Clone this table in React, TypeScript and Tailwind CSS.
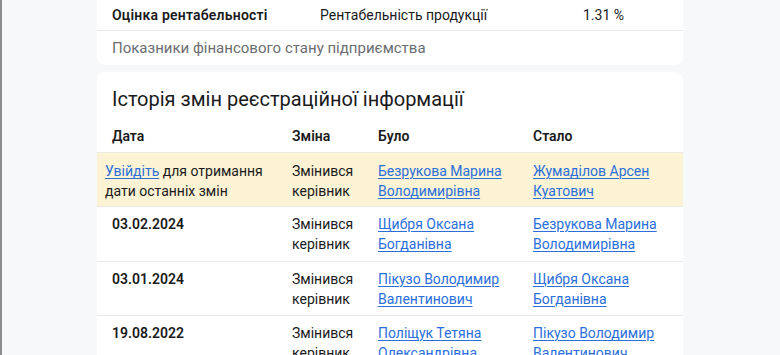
import React from "react";

const rows = [
  {
    date: "03.02.2024",
    was: ["Щибря Оксана", "Богданівна"],
    now: ["Безрукова Марина", "Володимирівна"],
  },
  {
    date: "03.01.2024",
    was: ["Пікузо Володимир", "Валентинович"],
    now: ["Щибря Оксана", "Богданівна"],
  },
  {
    date: "19.08.2022",
    was: ["Поліщук Тетяна", "Олександрівна"],
    now: ["Пікузо Володимир", "Валентинович"],
  },
];

const grid = "grid grid-cols-[187px_86px_155px_1fr]";

function Name({ lines }: { lines: string[] }) {
  return (
    <a href="#" className="text-[#2b6fdc] underline underline-offset-2 decoration-1">
      {lines[0]}
      <br />
      {lines[1]}
    </a>
  );
}

export default function App() {
  return (
    <div
      className="h-[355px] overflow-hidden border-l-2 border-[#8b8b8b] bg-[#f7f8fa] text-[14px] leading-5 text-[#1a1a1c]"
      style={{ fontFamily: "Roboto, 'Noto Sans', sans-serif" }}
    >
      <div className="ml-[95px] w-[586px]">
        {/* Finance card */}
        <div className="rounded-b-lg bg-white">
          <div className="flex h-[31px] items-center border-b border-[#e8e9ec] pl-[15px]">
            <span className="w-[208px] font-semibold tracking-[0.2px]">Оцінка рентабельності</span>
            <span className="w-[263px]">Рентабельність продукції</span>
            <span>1.31 %</span>
          </div>
          <div className="flex h-[34px] items-center pl-[15px] text-[15px] text-[#6b6d72]">
            Показники фінансового стану підприємства
          </div>
        </div>

        {/* History card */}
        <div className="mt-[7px] rounded-t-lg bg-white">
          <h2 className="px-[15px] pt-[13px] text-[20px] leading-7">
            Історія змін реєстраційної інформації
          </h2>
          <div className={`${grid} mt-[13px] pb-[6px] font-semibold`}>
            <div className="pl-[15px]">Дата</div>
            <div className="pl-2">Зміна</div>
            <div className="pl-2">Було</div>
            <div className="pl-2">Стало</div>
          </div>
          <div className={`${grid} border-t border-[#eceae3] bg-[#fcf3d4] pt-[8px] pb-[5px]`}>
            <div className="pl-2">
              <a href="#" className="text-[#2b6fdc] underline underline-offset-2 decoration-1">
                Увійдіть
              </a>{" "}
              для отримання
              <br />
              дати останніх змін
            </div>
            <div className="pl-2">
              Змінився
              <br />
              керівник
            </div>
            <div className="pl-2">
              <Name lines={["Безрукова Марина", "Володимирівна"]} />
            </div>
            <div className="pl-2">
              <Name lines={["Жумаділов Арсен", "Куатович"]} />
            </div>
          </div>
          {rows.map((r) => (
            <div key={r.date} className={`${grid} border-t border-[#e8e9ec] pt-[7px] pb-[6.5px]`}>
              <div className="pl-[15px] font-semibold">{r.date}</div>
              <div className="pl-2">
                Змінився
                <br />
                керівник
              </div>
              <div className="pl-2">
                <Name lines={r.was} />
              </div>
              <div className="pl-2">
                <Name lines={r.now} />
              </div>
            </div>
          ))}
        </div>
      </div>
    </div>
  );
}
